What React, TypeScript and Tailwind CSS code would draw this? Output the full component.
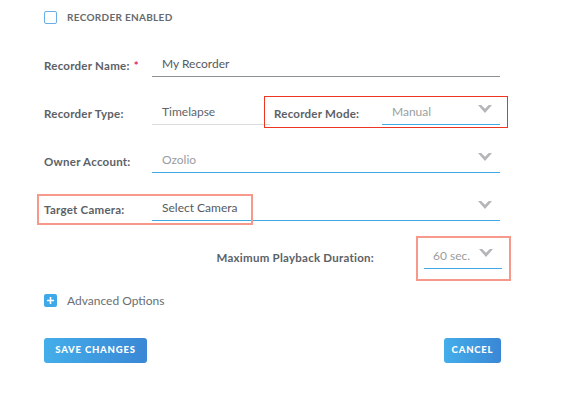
import React, { FC } from 'react';

const Chevron: FC<{ className?: string }> = ({ className = '' }) => (
  <svg
    width="14"
    height="8"
    viewBox="0 0 14 8"
    className={className}
  >
    <path d="M0 0 L3.2 0 L7 3.8 L10.8 0 L14 0 L7 8 Z" fill="#b3b6b9" />
  </svg>
);

const labelCls =
  'w-[108px] shrink-0 mb-[2px] text-[11.5px] font-bold tracking-[0.25px] leading-[18px] text-[#5c6166]';

const App: FC = () => {
  return (
    <div
      className="relative w-[565px] h-[393px] bg-white pl-[44px] pr-[65px] pt-[10px]"
      style={{ fontFamily: 'Lato, "Open Sans", sans-serif' }}
    >
      {/* recorder enabled */}
      <div className="flex items-center h-[14px]">
        <div className="w-[13px] h-[13px] rounded-[2px] border border-[#6aaee8]" />
        <span className="ml-[10px] text-[10px] font-bold tracking-[0.3px] text-[#666a6e]">
          RECORDER ENABLED
        </span>
      </div>

      {/* name */}
      <div className="mt-[29px] flex items-end">
        <div className={labelCls}>
          Recorder Name:<span className="ml-[4px] text-[#e0245e]">*</span>
        </div>
        <div className="flex-1 h-[24px] border-b border-[#8c9196] pl-[10px] text-[12px] leading-[21px] text-[#555a5e]">
          My Recorder
        </div>
      </div>

      {/* type + mode */}
      <div className="mt-[24px] flex items-end">
        <div className={labelCls}>Recorder Type:</div>
        <div className="w-[118px] h-[24px] border-b border-[#dcdcdc] pl-[10px] text-[12px] leading-[22px] text-[#606468]">
          Timelapse
        </div>
        <div className="ml-[4px] mb-[2px] w-[108px] text-[11.5px] font-bold tracking-[0.25px] leading-[18px] text-[#5c6166]">
          Recorder Mode:
        </div>
        <div className="flex-1 h-[24px] border-b border-[#41a9e6] pl-[10px] pr-[8px] flex items-start justify-between">
          <span className="text-[12px] leading-[22px] text-[#9a9da0]">Manual</span>
          <Chevron className="mt-[4px]" />
        </div>
      </div>

      {/* owner */}
      <div className="mt-[24px] flex items-end">
        <div className={labelCls}>Owner Account:</div>
        <div className="flex-1 h-[24px] border-b border-[#41a9e6] pl-[10px] pr-[8px] flex items-start justify-between">
          <span className="text-[12px] leading-[22px] text-[#9a9da0]">Ozolio</span>
          <Chevron className="mt-[4px]" />
        </div>
      </div>

      {/* target camera */}
      <div className="mt-[24px] flex items-end">
        <div className={labelCls}>Target Camera:</div>
        <div className="flex-1 h-[24px] border-b border-[#41a9e6] pl-[10px] pr-[8px] flex items-start justify-between">
          <span className="text-[12px] leading-[22px] text-[#555a5e]">Select Camera</span>
          <Chevron className="mt-[4px]" />
        </div>
      </div>

      {/* max playback */}
      <div className="mt-[24px] flex items-end justify-end mr-[-2px]">
        <div className="mr-[50px] mb-[2px] text-[11.5px] font-bold tracking-[0.25px] leading-[18px] text-[#5c6166]">
          Maximum Playback Duration:
        </div>
        <div className="w-[78px] h-[24px] border-b border-[#41a9e6] pl-[9px] pr-[9px] flex items-start justify-between">
          <span className="text-[12px] leading-[22px] text-[#9a9da0]">60 sec.</span>
          <Chevron className="mt-[4px]" />
        </div>
      </div>

      {/* advanced */}
      <div className="mt-[25px] flex items-center h-[13px]">
        <div className="w-[13px] h-[13px] rounded-[2px] bg-[#3fa9e8] flex items-center justify-center">
          <svg width="9" height="9" viewBox="0 0 9 9">
            <path d="M4.5 1 V8 M1 4.5 H8" stroke="white" strokeWidth="1.6" />
          </svg>
        </div>
        <span className="ml-[10px] text-[12px] text-[#6a6e72]">Advanced Options</span>
      </div>

      {/* buttons */}
      <div className="mt-[31px] flex justify-between mr-[-1px]">
        <button className="w-[103px] h-[25px] rounded-[3px] bg-gradient-to-r from-[#44aeea] to-[#3a87d5] text-[9.5px] font-black tracking-[0.8px] text-white">
          SAVE CHANGES
        </button>
        <button className="w-[57px] h-[25px] rounded-[3px] bg-gradient-to-r from-[#44aeea] to-[#3a87d5] text-[9.5px] font-black tracking-[0.8px] text-white">
          CANCEL
        </button>
      </div>

      {/* annotation boxes */}
      <div className="absolute left-[264px] top-[96px] w-[244px] h-[32px] border-[1.5px] border-[#ee3522] pointer-events-none" />
      <div className="absolute left-[37px] top-[194px] w-[216px] h-[31px] border-2 border-[#f7998a] pointer-events-none" />
      <div className="absolute left-[416px] top-[236px] w-[95px] h-[45px] border-2 border-[#f7998a] pointer-events-none" />
    </div>
  );
};

export default App;
